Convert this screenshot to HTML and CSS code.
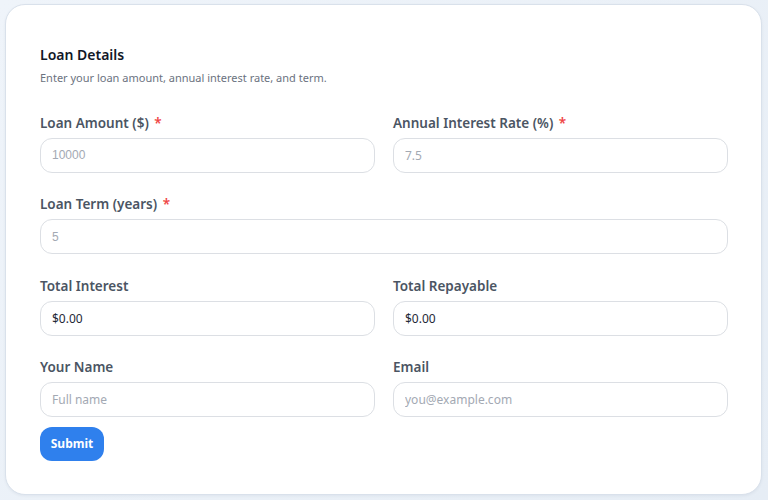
FILE: index.html
```html
<!DOCTYPE html>
<html lang="en">
<head>
<meta charset="utf-8">
<title>Loan Calculator</title>
<link rel="stylesheet" href="styles.css">
</head>
<body>
<main class="card">
  <header class="card-head">
    <h1 class="title">Loan Details</h1>
    <p class="subtitle">Enter your loan amount, annual interest rate, and term.</p>
  </header>
  <form class="form">
    <div class="grid">
      <div class="field">
        <label class="label" for="amount">Loan Amount ($) <span class="req">*</span></label>
        <input class="input input-arial" id="amount" type="text" placeholder="10000">
      </div>
      <div class="field">
        <label class="label" for="rate">Annual Interest Rate (%) <span class="req">*</span></label>
        <input class="input" id="rate" type="text" placeholder="7.5">
      </div>
      <div class="field field-wide">
        <label class="label" for="term">Loan Term (years) <span class="req">*</span></label>
        <input class="input input-arial" id="term" type="text" placeholder="5">
      </div>
      <div class="field">
        <label class="label" for="interest">Total Interest</label>
        <input class="input input-value" id="interest" type="text" value="$0.00" readonly>
      </div>
      <div class="field">
        <label class="label" for="repay">Total Repayable</label>
        <input class="input input-value" id="repay" type="text" value="$0.00" readonly>
      </div>
      <div class="field">
        <label class="label" for="name">Your Name</label>
        <input class="input" id="name" type="text" placeholder="Full name">
      </div>
      <div class="field">
        <label class="label" for="email">Email</label>
        <input class="input" id="email" type="email" placeholder="you@example.com">
      </div>
    </div>
    <button class="submit" type="button">Submit</button>
  </form>
</main>
</body>
</html>
```

FILE: styles.css
```css
* { box-sizing: border-box; }

html, body { height: 100%; }

body {
  margin: 0;
  padding: 4px 6px 5px 5px;
  background: linear-gradient(135deg, #eff4fa 0%, #e6edf5 100%);
  font-family: "Noto Sans", "Open Sans", sans-serif;
  color: #1f2937;
}

.card {
  height: 100%;
  background: #ffffff;
  border: 1px solid #d9e1eb;
  border-radius: 20px;
  padding: 40px 33px 0 34px;
  box-shadow: 0 1px 3px rgba(30, 50, 80, 0.06);
}

.card-head { margin-bottom: 25.5px; }

.title {
  margin: 0;
  font-size: 14px;
  line-height: 20px;
  font-weight: 600;
  color: #111827;
}

.subtitle {
  margin: 5px 0 0;
  font-size: 11px;
  line-height: 16px;
  color: #6b7280;
}

.grid {
  display: grid;
  grid-template-columns: 1fr 1fr;
  column-gap: 18px;
  row-gap: 20.5px;
}

.field { display: flex; flex-direction: column; }
.field-wide { grid-column: 1 / -1; }

.label {
  font-size: 13.5px;
  line-height: 22px;
  font-weight: 600;
  color: #4b5563;
  margin-bottom: 4px;
}

.req { color: #ef4444; margin-left: 2px; }

.input {
  height: 35px;
  border: 1px solid #dcdfe4;
  border-radius: 12px;
  padding: 0 11px;
  font-family: "Noto Sans", "Open Sans", sans-serif;
  font-size: 12px;
  color: #111827;
  background: #ffffff;
  outline: none;
}

.input::placeholder { color: #a3a9b3; }
.input-arial { font-family: "Liberation Sans", Arial, sans-serif; }
.input-value { color: #1f2937; }

.submit {
  margin-top: 9.5px;
  height: 34px;
  width: 64px;
  border: none;
  border-radius: 12px;
  background: #2f80ed;
  color: #ffffff;
  font-family: "Noto Sans", "Open Sans", sans-serif;
  font-size: 12px;
  font-weight: 700;
  cursor: pointer;
}
```
